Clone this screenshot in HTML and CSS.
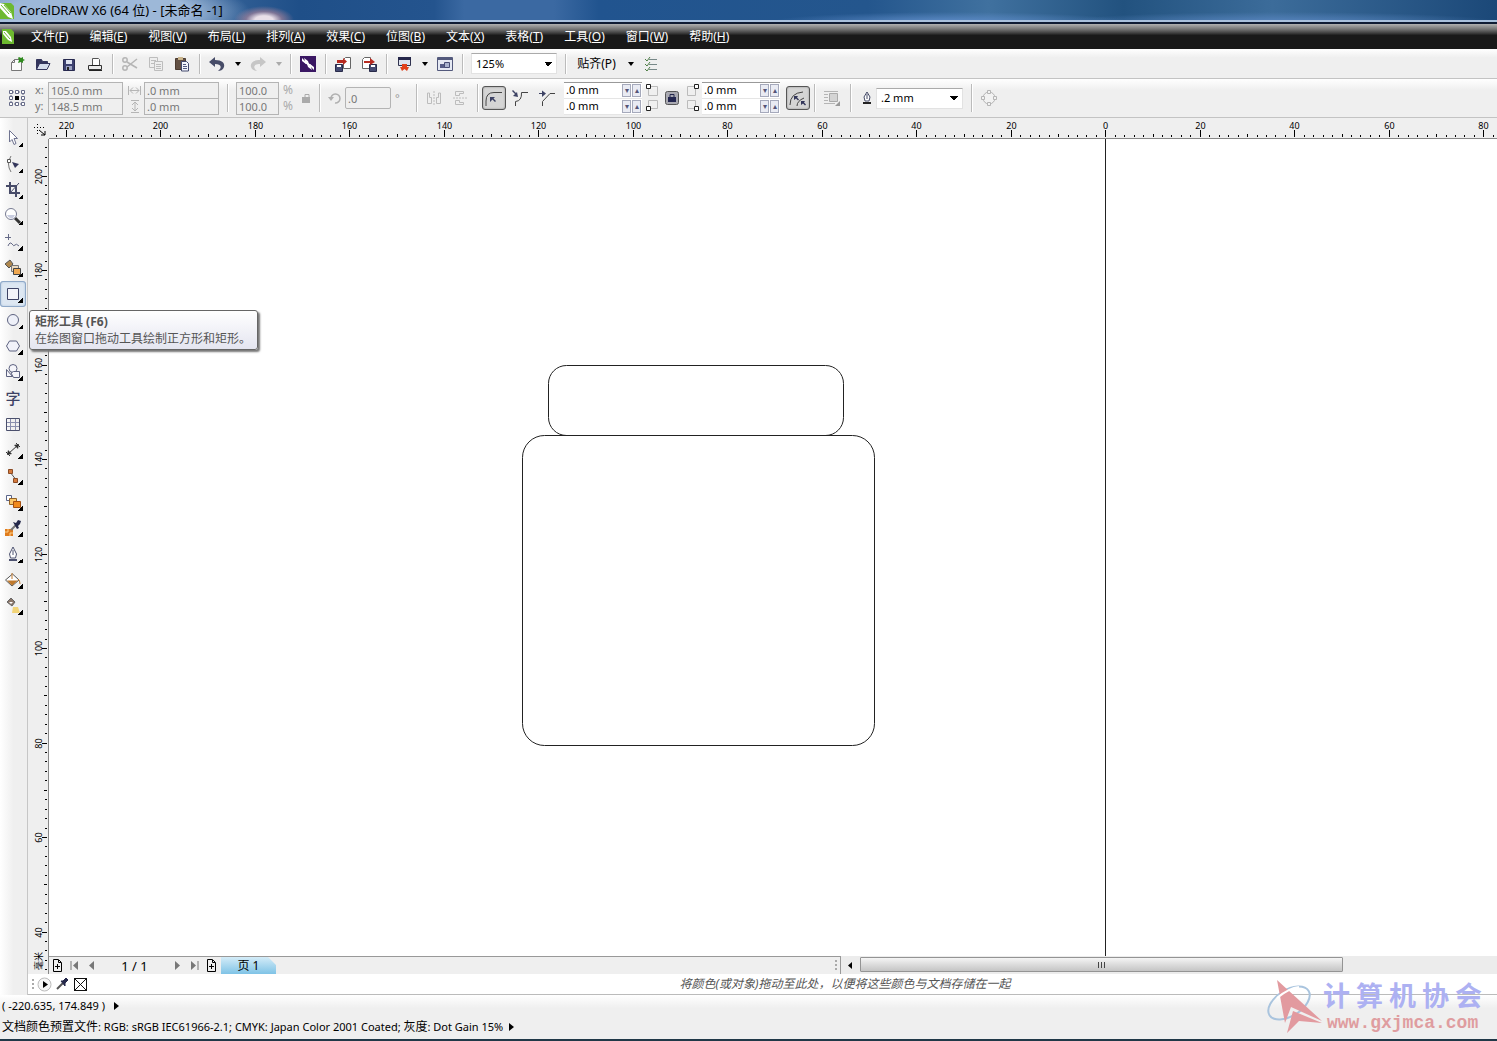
FILE: index.html
```html
<!DOCTYPE html>
<html lang="zh-CN">
<head>
<meta charset="utf-8">
<title>CorelDRAW X6 (64 位) - [未命名 -1]</title>
<link rel="stylesheet" href="styles.css">
</head>
<body>
<header class="titlebar">
  <svg class="app-logo" width="15" height="20" viewBox="0 0 15 20"><path d="M0 3H11L14 6V19H0Z" fill="#6db92f"/><path d="M0 3L4 4L11 12L13 19L8 17L0 8Z" fill="#fff"/><path d="M1 5L9 14M4 5L11 13" stroke="#6db92f"/></svg>
  <h1 class="title">CorelDRAW X6 (64 位) - [未命名 -1]</h1>
</header>

<nav class="menubar">
  <svg class="doc-logo" width="12" height="15" viewBox="0 0 12 15"><path d="M0 0H9L12 3V15H0Z" fill="#6db92f"/><path d="M1 2L4 2L9 8L10 13L6 11L1 5Z" fill="#fff"/><path d="M2 3L8 10" stroke="#6db92f"/></svg>
  <button class="menu">文件(<u>F</u>)</button>
  <button class="menu">编辑(<u>E</u>)</button>
  <button class="menu">视图(<u>V</u>)</button>
  <button class="menu">布局(<u>L</u>)</button>
  <button class="menu">排列(<u>A</u>)</button>
  <button class="menu">效果(<u>C</u>)</button>
  <button class="menu">位图(<u>B</u>)</button>
  <button class="menu">文本(<u>X</u>)</button>
  <button class="menu">表格(<u>T</u>)</button>
  <button class="menu">工具(<u>O</u>)</button>
  <button class="menu">窗口(<u>W</u>)</button>
  <button class="menu">帮助(<u>H</u>)</button>
</nav>

<div class="toolbar standard">
  <button class="tool" aria-label="新建"><svg width="16" height="16" viewBox="0 0 16 16"><path d="M2.500 14.500V6.500L5.500 3.500H12.500V14.500Z" fill="#fafafa" stroke="#777"/><path d="M5.500 3.500V6.500H2.500" fill="none" stroke="#777"/><path d="M10 1L12 2L14 1L14 3L16 4L14 5L14 7L12 6L9 7L10 4L9 2Z" fill="#2f8a1e"/></svg></button>
  <button class="tool" aria-label="打开"><svg width="16" height="16" viewBox="0 0 16 16"><path d="M1.500 13.500V3.500H6.500L7.500 5.500H12.500V7.500" fill="#33355c" stroke="#33355c"/><path d="M1.500 13.500L4.500 7.500H15L12 13.500Z" fill="#d5dcec" stroke="#33355c"/></svg></button>
  <button class="tool" aria-label="保存"><svg width="16" height="16" viewBox="0 0 16 16"><path d="M2.500 3.500H13.500V14.500H2.500Z" fill="#3d4170" stroke="#27294f"/><path d="M5 4H11V8H5Z" fill="#dfe3f0"/><path d="M5 10H11V14H5Z" fill="#9aa0c0"/><path d="M6 11H8V14H6Z" fill="#222"/></svg></button>
  <button class="tool" aria-label="打印"><svg width="16" height="16" viewBox="0 0 16 16"><path d="M5.500 9V2.500H11.500L12.500 3.500V9" fill="#fff" stroke="#555"/><path d="M1.500 9.500H14.500V13.500H1.500Z" fill="#ececec" stroke="#333"/><path d="M4 9.500H12M2 14.500H15" stroke="#222"/></svg></button>
  <i class="sep"></i>
  <button class="tool" aria-label="剪切"><svg width="18" height="16" viewBox="0 0 18 16" fill="none" stroke="#b5b5b5" stroke-width="1.500"><path d="M6 6L16 12M6 11L16 3"/><circle cx="4" cy="4" r="2.200"/><circle cx="4" cy="12" r="2.200"/></svg></button>
  <button class="tool" aria-label="复制"><svg width="16" height="16" viewBox="0 0 16 16" fill="#eee" stroke="#bdbdbd"><path d="M1.500 1.500H9.500V11.500H1.500ZM3 4.500H8M3 7.500H8"/><path d="M6.500 5.500H14.500V14.500H6.500ZM8 8.500H13M8 10.500H13M8 12.500H13"/></svg></button>
  <button class="tool" aria-label="粘贴"><svg width="16" height="16" viewBox="0 0 16 16"><path d="M1.500 2.500H11.500V13.500H1.500Z" fill="#625044" stroke="#4b3b31"/><path d="M4 1H9V4H4Z" fill="#c9b48c"/><path d="M7.500 5.500H12.500L14.500 7.500V15H7.500Z" fill="#f4f6fb" stroke="#454b6e"/><path d="M9 8.500H12M9 10.500H13M9 12.500H13" stroke="#555b80"/></svg></button>
  <i class="sep"></i>
  <button class="tool" aria-label="撤消"><svg width="18" height="16" viewBox="0 0 18 16"><path d="M1 6L7 1V4C14 4 17 7 16 11C15 14 12 15 10 15C14 12 14 8 7 8V11Z" fill="#474c68"/></svg></button>
  <button class="drop" aria-label="撤消列表"><i class="caret"></i></button>
  <button class="tool" aria-label="重做"><svg width="18" height="16" viewBox="0 0 18 16"><path d="M17 6L11 1V4C4 4 1 7 2 11C3 14 6 15 8 15C4 12 4 8 11 8V11Z" fill="#c6c6c6"/></svg></button>
  <button class="drop" aria-label="重做列表"><i class="caret pale"></i></button>
  <i class="sep"></i>
  <button class="tool" aria-label="搜索内容"><svg width="16" height="16" viewBox="0 0 16 16"><path d="M0 0H16V16H0Z" fill="#3a1763"/><path d="M2 2L5 5L4 2L8 5L9 8L6 8L2 5ZM14 14L11 11L12 14L8 11L7 8L10 8L14 11Z" fill="#fff"/><path d="M5 6L11 10" stroke="#fff" stroke-width="2"/></svg></button>
  <i class="sep"></i>
  <button class="tool" aria-label="导入"><svg width="18" height="16" viewBox="0 0 18 16"><path d="M9.500 12.500V3.500L11.500 1.500H16.500V12.500Z" fill="#fff" stroke="#666"/><path d="M1.500 8.500H8.500V15.500H1.500Z" fill="#444a72" stroke="#292b4a"/><path d="M3 9H7V11H3Z" fill="#fff"/><path d="M3 7V4H9V2L13 5.500L9 9V7Z" fill="#b72a20"/></svg></button>
  <button class="tool" aria-label="导出"><svg width="18" height="16" viewBox="0 0 18 16"><path d="M2.500 12.500V3.500L4.500 1.500H10.500V12.500Z" fill="#fff" stroke="#666"/><path d="M9.500 8.500H16.500V15.500H9.500Z" fill="#444a72" stroke="#292b4a"/><path d="M11 9H15V11H11Z" fill="#fff"/><path d="M4 5H10V2L15 6L10 9V7H4Z" fill="#b72a20"/></svg></button>
  <i class="sep"></i>
  <button class="tool" aria-label="应用程序启动器"><svg width="16" height="16" viewBox="0 0 16 16"><path d="M2.500 1.500H14.500V9.500H2.500Z" fill="#dde2ee" stroke="#30324f"/><path d="M2 1H15V4H2Z" fill="#25274a"/><path d="M6 8H11V11L13 11L11 15L8.500 13L6 15L4 11L6 11Z" fill="#e0401c"/></svg></button>
  <button class="drop" aria-label="应用程序列表"><i class="caret"></i></button>
  <button class="tool" aria-label="欢迎屏幕"><svg width="16" height="16" viewBox="0 0 16 16"><path d="M.5 1.500H15.500V14.500H.5Z" fill="#e5e9f3" stroke="#53597c"/><path d="M1 2H15V4H1Z" fill="#53597c"/><path d="M3 8H8V12H3Z" fill="#565d88"/><path d="M7.500 6.500H12.500V11.500H7.500Z" fill="#aab3cf" stroke="#464c75"/></svg></button>
  <i class="sep"></i>
  <select class="zoom-level" aria-label="缩放级别"><option>125%</option></select>
  <i class="sep"></i>
  <button class="snap">贴齐(P)</button>
  <button class="drop" aria-label="贴齐列表"><i class="caret"></i></button>
  <button class="tool" aria-label="选项"><svg width="14" height="16" viewBox="0 0 14 16" fill="none"><path d="M5 3.500H13M5 8.500H13M5 13.500H13" stroke="#788"/><path d="M1 3L3 5L6 1M1 8L3 10L6 6M1 13L3 15L6 11" stroke="#4e7f45"/></svg></button>
</div>

<div class="toolbar property">
  <svg class="origin" width="18" height="18" viewBox="0 0 18 18" fill="#fff" stroke="#666b88"><path d="M3 3H15V15H3Z" fill="none" stroke-dasharray="1 1"/><path d="M1.500 1.500h3v3h-3zM7.500 1.500h3v3h-3zM13.500 1.500h3v3h-3zM1.500 7.500h3v3h-3zM13.500 7.500h3v3h-3zM1.500 13.500h3v3h-3zM7.500 13.500h3v3h-3zM13.500 13.500h3v3h-3z"/><path d="M7 7H11V11H7Z" fill="#000" stroke="none"/></svg>
  <div class="pair-grid position">
    <label for="px">x:</label><input id="px" class="field" value="105.0 mm" disabled>
    <label for="py">y:</label><input id="py" class="field" value="148.5 mm" disabled>
  </div>
  <div class="pair-grid size">
    <label for="pw" aria-label="宽度"><svg width="13" height="11" viewBox="0 0 13 11" fill="none" stroke="#b5b5b5"><path d="M.5 1V10M12.500 1V10M2 5.500H11M5 2.500L2 5.500L5 8.500M8 2.500L11 5.500L8 8.500"/></svg></label><input id="pw" class="field" value=".0 mm" disabled>
    <label for="ph" aria-label="高度"><svg width="13" height="13" viewBox="0 0 13 13" fill="none" stroke="#b5b5b5"><path d="M3 .5H11M3 12.500H11M7 2V11M4 5L7 2L10 5M4 8L7 11L10 8"/></svg></label><input id="ph" class="field" value=".0 mm" disabled>
  </div>
  <i class="sep"></i>
  <div class="pair-grid scale">
    <input id="sx" class="field" value="100.0" disabled><label for="sx">%</label>
    <input id="sy" class="field" value="100.0" disabled><label for="sy">%</label>
  </div>
  <button class="tool ratio" aria-label="锁定比率"><svg width="12" height="12" viewBox="0 0 12 12"><path d="M2 5H10V11H2Z" fill="#aaa"/><path d="M5 5V2.500H9V5" fill="none" stroke="#aaa"/></svg></button>
  <i class="sep"></i>
  <label class="angle" for="rot" aria-label="旋转角度"><svg width="14" height="14" viewBox="0 0 14 14"><path d="M3 8A4.500 4.500 0 1 1 7 12" fill="none" stroke="#b0b0b0" stroke-width="1.500"/><path d="M0 6H6L3 10Z" fill="#b0b0b0"/></svg></label>
  <input id="rot" class="field rotation" value=".0" disabled>
  <span class="degree">°</span>
  <i class="sep"></i>
  <button class="tool" aria-label="水平镜像"><svg width="16" height="14" viewBox="0 0 16 14" fill="none" stroke="#bcbcbc"><path d="M1.500 2V12.500H5.500V6.500H3.500V2ZM14.500 2V12.500H10.500V6.500H12.500V2Z"/><path d="M8 0V14" stroke-dasharray="2 1"/></svg></button>
  <button class="tool" aria-label="垂直镜像"><svg width="16" height="16" viewBox="0 0 16 16" fill="none" stroke="#bcbcbc"><path d="M3.500 1.500H11.500V3.500H7.500V5.500H3.500ZM3.500 14.500H11.500V12.500H7.500V10.500H3.500Z"/><path d="M1 8H15" stroke-dasharray="2 1"/></svg></button>
  <i class="sep"></i>
  <button class="tool pressed" aria-label="圆角"><svg width="20" height="18" viewBox="0 0 20 18"><path d="M2 17V12Q2 3.500 10 3.500H18" fill="none" stroke="#444"/><path d="M6 8H11L9.500 9.500L12 12L11 13L8.500 10.500L6 13Z" fill="#3d4264"/></svg></button>
  <button class="tool corner" aria-label="扇形角"><svg width="18" height="18" viewBox="0 0 18 18"><path d="M4.500 17V12.500Q11 12 10.500 3.500H17" fill="none" stroke="#444"/><path d="M7 8L6 3L5 4L2 1L1 2L4 5L2 7Z" fill="#3d4264"/></svg></button>
  <button class="tool corner" aria-label="倒棱角"><svg width="18" height="18" viewBox="0 0 18 18"><path d="M4.500 17V12.500L12 4.500H17" fill="none" stroke="#444"/><path d="M1 4.500H5" stroke="#3d4264"/><path d="M4 1.500L8 4.500L4 8Z" fill="#3d4264"/></svg></button>
  <div class="radii">
    <div class="spin"><input aria-label="左上角" value=".0 mm"><button aria-label="减小">▾</button><button aria-label="增大">▴</button></div>
    <div class="spin"><input aria-label="左下角" value=".0 mm"><button aria-label="减小">▾</button><button aria-label="增大">▴</button></div>
  </div>
  <svg class="corners" width="14" height="28" viewBox="0 0 14 28" fill="none"><path d="M3.500 2.500H12.500V11.500H3.500ZM3.500 16.500H12.500V24.500H3.500Z" stroke="#bbb"/><path d="M1.500 .5H5.500V4.500H1.500ZM1.500 22.500H5.500V26.500H1.500Z" fill="#fff" stroke="#222"/></svg>
  <button class="tool link" aria-label="同时编辑所有角"><svg width="14" height="14" viewBox="0 0 14 14"><rect x=".5" y=".5" width="13" height="13" rx="2" fill="#a9a9b1" stroke="#555"/><path d="M3 6H11V11H3Z" fill="#23264f"/><path d="M5 6V3.500H9V6" fill="none" stroke="#23264f"/></svg></button>
  <svg class="corners" width="14" height="28" viewBox="0 0 14 28" fill="none"><path d="M1.500 2.500H9.500V11.500H1.500ZM1.500 16.500H9.500V24.500H1.500Z" stroke="#bbb"/><path d="M8.500 .5H12.500V4.500H8.500ZM8.500 22.500H12.500V26.500H8.500Z" fill="#fff" stroke="#222"/></svg>
  <div class="radii">
    <div class="spin"><input aria-label="右上角" value=".0 mm"><button aria-label="减小">▾</button><button aria-label="增大">▴</button></div>
    <div class="spin"><input aria-label="右下角" value=".0 mm"><button aria-label="减小">▾</button><button aria-label="增大">▴</button></div>
  </div>
  <button class="tool pressed relative" aria-label="相对角缩放"><svg width="20" height="18" viewBox="0 0 20 18"><path d="M2 16Q2 4 15 3M9 17Q9 12 16 9" fill="none" stroke="#444"/><path d="M6 7H10L9 8.500L11 10.500L10 11.500L8 9.500L6 11ZM13 12H17L16 13.500L18 15.500L17 16.500L15 14.500L13 16Z" fill="#33365a"/></svg></button>
  <i class="sep"></i>
  <button class="tool wrap" aria-label="文本换行"><svg width="18" height="18" viewBox="0 0 18 18"><path d="M1 2.500H15M1 5.500H5M1 8.500H5M1 11.500H5M1 14.500H12" stroke="#b5b5b5"/><path d="M6.500 4.500H14.500V12.500H6.500Z" fill="#d4d4d4" stroke="#aaa"/><path d="M17 12V17H12Z" fill="#999"/></svg></button>
  <i class="sep"></i>
  <label class="pen" for="outline" aria-label="轮廓宽度"><svg width="10" height="14" viewBox="0 0 10 14"><path d="M5 1L8 6L7 10H3L2 6ZM5 3V8" fill="#fff" stroke="#444a66"/><path d="M1 11H9V13H1Z" fill="#222"/></svg></label>
  <select id="outline" class="outline"><option>.2 mm</option></select>
  <i class="sep"></i>
  <button class="tool" aria-label="转换为曲线"><svg width="18" height="18" viewBox="0 0 18 18" fill="#f2f2f2" stroke="#b5b5b5"><circle cx="9" cy="9" r="6"/><path d="M7.500 1.500h3v3h-3zM7.500 13.500h3v3h-3zM1.500 7.500h3v3h-3zM13.500 7.500h3v3h-3z"/></svg></button>
</div>

<main class="workspace">
  <aside class="toolbox">
    <button class="fly" aria-label="选择工具"><svg width="18" height="18" viewBox="0 0 18 18"><path d="M5.500 1.500V13L8 10.500L10 15.500L12 14.500L10 9.500H13.500Z" fill="#fff" stroke="#6f7390"/></svg></button>
    <button class="fly" aria-label="形状工具"><svg width="18" height="18" viewBox="0 0 18 18"><path d="M7 1Q2 9 7 17" fill="none" stroke="#777"/><path d="M3.500 4.500h3v3h-3z" fill="#fff" stroke="#555"/><path d="M8 7L15 9L11 13Z" fill="#33365a"/></svg></button>
    <button class="fly" aria-label="裁剪工具"><svg width="18" height="18" viewBox="0 0 18 18"><path d="M2 5H12V16M6 1V12H16" fill="none" stroke="#474b68" stroke-width="2"/><path d="M6 12L15 2" stroke="#474b68"/></svg></button>
    <button class="fly" aria-label="缩放工具"><svg width="18" height="18" viewBox="0 0 18 18"><path d="M11 11L16 16" stroke="#333" stroke-width="3"/><circle cx="7" cy="7" r="5.500" fill="#fff" stroke="#777b92"/><path d="M3 8H11Q9 12 7 11.500Q4 11 3 8" fill="#c9cde0"/></svg></button>
    <button class="fly" aria-label="手绘工具"><svg width="18" height="18" viewBox="0 0 18 18" fill="none" stroke="#666b88"><path d="M1 4.500H7M4.500 1V7M4 13Q6 8 8 11T11 12T15 13"/></svg></button>
    <button class="fly" aria-label="智能填充工具"><svg width="18" height="18" viewBox="0 0 18 18"><path d="M1 5L6 1L9 5L5 9Z" fill="#b0884e" stroke="#555"/><path d="M7.500 6.500H14.500V12.500H7.500Z" fill="#ecd9bd" stroke="#777"/><path d="M9.500 9.500H16.500V15.500H9.500Z" fill="#f0a850" stroke="#444"/></svg></button>
    <button class="fly active" aria-label="矩形工具"><svg width="18" height="18" viewBox="0 0 18 18"><path d="M3.500 3.500H14.500V14.500H3.500Z" fill="#f3f4fa" stroke="#3d4264"/></svg></button>
    <button class="fly" aria-label="椭圆形工具"><svg width="18" height="18" viewBox="0 0 18 18"><circle cx="9" cy="9" r="5.500" fill="#eef0f8" stroke="#5d6280"/></svg></button>
    <button class="fly" aria-label="多边形工具"><svg width="18" height="18" viewBox="0 0 18 18"><path d="M2.500 9L5.500 4H12.500L15.500 9L12.500 14H5.500Z" fill="#f1f2fa" stroke="#5d6280"/></svg></button>
    <button class="fly" aria-label="基本形状"><svg width="18" height="18" viewBox="0 0 18 18" fill="#f5f5fa" stroke="#5d6280"><circle cx="9" cy="5.500" r="4"/><path d="M2.500 6.500L8.500 13.500H2.500ZM9.500 8.500H15.500V14.500H9.500L7 10Z"/></svg></button>
    <button class="glyph" aria-label="文本工具">字</button>
    <button aria-label="表格工具"><svg width="18" height="18" viewBox="0 0 18 18" fill="#fff" stroke="#8a8fae"><path d="M3 7.500H15M3 11.500H15M6.500 4V15M11.500 4V15"/><path d="M2.500 3.500H15.500V15.500H2.500Z" fill="none" stroke="#4a4f6c"/></svg></button>
    <button class="fly" aria-label="平行度量工具"><svg width="18" height="18" viewBox="0 0 18 18"><path d="M4 13L14 4M2 11L6 15M12 2L16 6" stroke="#333"/><path d="M3 14L4 9L8 13ZM15 3L14 8L10 4Z" fill="#333"/></svg></button>
    <button class="fly" aria-label="直线连接器"><svg width="18" height="18" viewBox="0 0 18 18"><path d="M6 5L13 14" stroke="#555"/><path d="M4.500 2.500h4v4h-4zM9.500 11.500h4v4h-4z" fill="#d67a3c" stroke="#8b4b24"/></svg></button>
    <button class="fly" aria-label="调和工具"><svg width="18" height="18" viewBox="0 0 18 18"><path d="M2.500 2.500h5v5h-5z" fill="#fff" stroke="#5a658a"/><path d="M5.500 5.500h7v6h-7z" fill="#fbc86b" stroke="#936226"/><path d="M9.500 8.500h7v6h-7z" fill="#f08a1d" stroke="#a34f10"/></svg></button>
    <button class="fly" aria-label="颜色滴管工具"><svg width="18" height="18" viewBox="0 0 18 18"><path d="M1 10H9V17H1Z" fill="#e07c1d"/><path d="M4 10V13H1M6 17V14H9" stroke="#fbd08d" fill="none"/><path d="M7 11L12 6" stroke="#777" stroke-width="2"/><path d="M9 3L12 4L14 1L17 2L16 5L14 7L15 9L13 10Z" fill="#25294b"/></svg></button>
    <button class="fly" aria-label="轮廓笔"><svg width="18" height="18" viewBox="0 0 18 18"><path d="M9 2L12.500 9L11.500 13H6.500L5.500 9ZM9 5V10" fill="#fff" stroke="#4d5270"/><path d="M5 14H13V16H5Z" fill="#4d5270"/></svg></button>
    <button class="fly" aria-label="填充工具"><svg width="18" height="18" viewBox="0 0 18 18"><path d="M1.500 9L8.500 3L15 9L8 15Z" fill="#fff" stroke="#555"/><path d="M3 9.500H14L8 14.500Z" fill="#c0792c"/><path d="M8 8V2M14 8Q16 9 16 13" stroke="#c0792c" fill="none"/></svg></button>
    <button class="fly" aria-label="交互式填充工具"><svg width="18" height="18" viewBox="0 0 18 18"><path d="M3 5L7 1L11 5L8 9Z" fill="#8a7568" stroke="#666"/><path d="M5 5H9L7 7Z" fill="#fff"/><path d="M9 10H14L16 16H8Z" fill="#f2d477"/></svg></button>
  </aside>

  <div class="tooltip" role="tooltip"><strong>矩形工具 (F6)</strong><span>在绘图窗口拖动工具绘制正方形和矩形。</span></div>

  <section class="document">
    <div class="ruler-row">
      <svg class="ruler-origin" width="20" height="20" viewBox="0 0 20 20"><path d="M9.500 6V16M6 9.500H16" stroke="#000" stroke-dasharray="1 2"/><path d="M11 12L17 17M17 13V17H13" fill="none" stroke="#000"/></svg>
      <svg class="ruler-x" id="ruler-x"></svg>
    </div>
    <div class="canvas-row">
      <svg class="ruler-y" id="ruler-y"></svg>
      <div class="view">
        <svg class="drawing">
          <line x1="1056.500" y1="0" x2="1056.500" y2="100%"/>
          <rect x="499.500" y="226.500" width="295" height="70" rx="18"/>
          <rect x="473.500" y="296.500" width="352" height="310" rx="22"/>
        </svg>
        <div class="pager-row">
          <div class="pager">
            <button aria-label="添加页"><svg width="11" height="13" viewBox="0 0 11 13" fill="none" stroke="#000"><path d="M1.500 .5H6.500L9.500 3.500V12.500H1.500ZM6.500 1V3.500H9M3 7.500H8M5.500 5V10"/></svg></button>
            <button aria-label="首页"><svg width="9" height="9" viewBox="0 0 9 9"><path d="M1 0V9" stroke="#777"/><path d="M8 0V9L3 4.500Z" fill="#777"/></svg></button>
            <button aria-label="上一页"><svg width="9" height="9" viewBox="0 0 9 9"><path d="M7 0V9L2 4.500Z" fill="#777"/></svg></button>
            <output class="count">1 / 1</output>
            <button aria-label="下一页"><svg width="9" height="9" viewBox="0 0 9 9"><path d="M2 0V9L7 4.500Z" fill="#777"/></svg></button>
            <button aria-label="末页"><svg width="9" height="9" viewBox="0 0 9 9"><path d="M8 0V9" stroke="#777"/><path d="M1 0V9L6 4.500Z" fill="#777"/></svg></button>
            <button aria-label="在后面添加页"><svg width="11" height="13" viewBox="0 0 11 13" fill="none" stroke="#000"><path d="M1.500 .5H6.500L9.500 3.500V12.500H1.500ZM6.500 1V3.500H9M3 7.500H8M5.500 5V10"/></svg></button>
            <button class="page-tab">页 1</button>
            <i class="grip"></i>
          </div>
          <div class="scroll">
            <button aria-label="向左滚动"><svg width="5" height="7" viewBox="0 0 5 7"><path d="M4 0V7L0 3.500Z"/></svg></button>
            <div class="thumb"><i></i><i></i><i></i></div>
            <div class="track"></div>
          </div>
        </div>
      </div>
    </div>
    <div class="palette">
      <i class="grip"></i>
      <button aria-label="调色板菜单"><svg width="15" height="15" viewBox="0 0 15 15"><circle cx="7.500" cy="7.500" r="6.500" fill="#f6f6f6" stroke="#bbb"/><path d="M6 4V11L11 7.500Z"/></svg></button>
      <button aria-label="滴管"><svg width="14" height="14" viewBox="0 0 14 14"><path d="M2 12L8 6" stroke="#555" stroke-width="2"/><path d="M6 4L8 4L11 1L13 3L10 6L10 9Z" fill="#25294b" stroke="#25294b"/></svg></button>
      <button aria-label="无填充"><svg width="15" height="15" viewBox="0 0 15 15"><path d="M1.500 1.500H13.500V13.500H1.500ZM1 1L14 14M14 1L1 14" fill="#fff" stroke="#111"/></svg></button>
      <em class="hint">将颜色(或对象)拖动至此处，以便将这些颜色与文档存储在一起</em>
    </div>
  </section>
</main>

<footer class="status">
  <p>( -220.635, 174.849 ) <i class="more"></i></p>
  <p><b>文档颜色预置文件</b>: RGB: sRGB IEC61966-2.1; CMYK: Japan Color 2001 Coated; <b>灰度</b>: Dot Gain 15% <i class="more"></i></p>
  <div class="watermark">
    <svg width="56" height="56" viewBox="0 0 56 56"><ellipse cx="22" cy="24" rx="23" ry="13" transform="rotate(-32 22 24)" fill="none" stroke="#a9c4de" stroke-width="2"/><path d="M10 1L55 42L24 28L18 44Z" fill="#e29a9f"/><path d="M26 32L55 44L32 42L20 54Z" fill="#e29a9f"/><path d="M10 19Q22 9 32 8" stroke="#fff" stroke-width="2" fill="none"/></svg>
    <div class="brand"><div class="brand-name"><span>计</span><span>算</span><span>机</span><span>协</span><span>会</span></div><div class="brand-url">www.gxjmca.com</div></div>
  </div>
</footer>
<script src="rulers.js"></script>
</body>
</html>
```
FILE: styles.css
```css
* { box-sizing: border-box; }
body {
  margin: 0;
  height: 100vh;
  display: flex;
  flex-direction: column;
  overflow: hidden;
  background: #efefef;
  color: #000;
  font: 11px/16px "Noto Sans", "Noto Sans CJK SC", sans-serif;
}
button, input, select { font: inherit; color: inherit; margin: 0; padding: 0; border: 0; background: none; border-radius: 0; }
button { display: flex; align-items: center; justify-content: center; flex: none; }
svg { display: block; flex: none; }
label { display: flex; align-items: center; }

.titlebar {
  display: flex;
  flex: none;
  height: 24px;
  gap: 4px;
  border-bottom: 2px solid #0f1b33;
  box-shadow: inset 0 -2px #a9c0dc;
  background:
    radial-gradient(ellipse 30px 14px at 264px 20px, #e9dfe8 30%, #c98f9d88 60%, transparent),
    radial-gradient(ellipse 150px 36px at 100px 12px, #9db8d8 60%, transparent),
    radial-gradient(ellipse 180px 10px at 950px 22px, #5e8cc8, transparent),
    radial-gradient(ellipse 220px 10px at 1280px 22px, #5784bd, transparent),
    linear-gradient(90deg, #6d93c0, #1f4f88 20%, #24548e 29%, #3b69a2 31%, #3b69a2 37%, #21548f 40%, #24568d 58%, #40719f 66%, #22527f 75%, #3c6c9a 85%, #1b4878);
}
.title { margin: 1px 0 0; font-size: 13px; line-height: 18px; font-weight: 400; }

.menubar {
  display: flex;
  align-items: center;
  flex: none;
  height: 25px;
  gap: 1px;
  padding: 0 2px;
  background: linear-gradient(#b0b0b0, #777 20%, #303030 40%, #191919 45%);
}
.doc-logo { margin-right: 6px; }
.menu { padding: 0 10px; color: #fff; font-size: 12px; line-height: 16px; }

.toolbar { display: flex; align-items: center; flex: none; background: linear-gradient(#fff, #efefef 30%); border-bottom: 1px solid #c3c3c3; }
.standard { height: 30px; padding-left: 4px; }
.tool { width: 26px; height: 26px; }
.drop { width: 15px; height: 26px; }
.caret { border: 3px solid transparent; border-top: 4px solid #000; border-bottom: 0; }
.pale { border-top-color: #aaa; }
.sep { flex: none; width: 1px; height: 20px; margin: 0 4px; background: #bbb; box-shadow: 1px 0 #fff; }
select {
  appearance: none;
  height: 21px;
  width: 86px;
  padding: 0 4px;
  border: 1px solid #e2e2e2;
  border-top-color: #aaa;
  background:
    linear-gradient(45deg, transparent 50%, #000 50%) right 8px center / 4px 4px no-repeat,
    linear-gradient(-45deg, transparent 50%, #000 50%) right 4px center / 4px 4px no-repeat,
    #fff;
}
.zoom-level { margin: 0 4px; }
.snap { width: 53px; font-size: 12px; }

.property { height: 39px; padding-left: 8px; color: #777; }
.property .sep { height: 28px; }
.pair-grid { display: grid; flex: none; grid-auto-rows: 16px; align-items: stretch; }
.origin { margin-right: 9px; }
.position { grid-template-columns: 13px 75px; }
.size { grid-template-columns: 21px 75px; margin-right: 4px; }
.size label { padding-left: 5px; }
.scale { grid-template-columns: 43px 18px; margin-left: 4px; }
.scale label { padding-left: 4px; color: #aaa; font-size: 12px; }
.field { min-width: 0; height: 17px; padding: 0 2px; border: 1px solid #b4b4b4; background: #efefef; color: #777; }
.rotation { width: 46px; height: 22px; border-radius: 2px; }
.angle { width: 21px; padding-left: 4px; }
.ratio { width: 18px; }
.degree { width: 21px; padding-left: 4px; color: #999; }
.property .pressed { width: 24px; height: 24px; border: 1px solid #555; border-radius: 3px; background: #d5d5d5; box-shadow: inset 0 0 2px #888; }
.corner { margin-left: 1px; }
.radii { width: 78px; margin-left: 4px; border-top: 1px solid #999; background: #fff; color: #000; }
.spin { display: flex; align-items: center; height: 16px; border-bottom: 1px solid #e5e5e5; }
.spin input { flex: 1; min-width: 0; padding-left: 2px; }
.spin button { width: 9px; height: 13px; margin-right: 1px; border: 1px solid #a5a9bb; background: #e9ebf3; color: #557; font-size: 8px; line-height: 8px; }
.corners { margin: 0 2px 0 3px; }
.corners + .radii { margin-left: 0; }
.link { width: 22px; }
.relative { margin-left: 6px; }
.wrap { margin-right: 1px; }
.pen { width: 21px; padding-left: 7px; }
.property .outline { color: #000; width: 87px; margin-right: 4px; }

.workspace { display: flex; flex: 1; min-height: 0; position: relative; }
.toolbox { flex: none; width: 28px; padding-top: 7px; border-right: 1px solid #c6c6c6; background: linear-gradient(90deg, #fff, #efefef 50%); }
.toolbox button { width: 26px; height: 26px; }
.fly { background: linear-gradient(135deg, transparent 50%, #000 50%) 18px 17px / 5px 5px no-repeat; }
.toolbox .active { outline: 1px solid #8fa9c8; outline-offset: -1px; border-radius: 3px; background-color: #dde7f2; box-shadow: inset 0 0 3px #7f9fc8; }
.glyph { color: #3d4264; font-size: 15px; font-weight: 500; }
.tooltip {
  position: absolute;
  z-index: 2;
  left: 29px;
  top: 192px;
  display: flex;
  flex-direction: column;
  padding: 2px 6px 2px 5px;
  border: 1px solid #666;
  border-radius: 3px;
  background: linear-gradient(#fff, #e4e5f0);
  box-shadow: 2px 2px 2px #777;
  color: #555;
  font-size: 12px;
  line-height: 17px;
  white-space: nowrap;
}
.document { display: flex; flex: 1; min-width: 0; flex-direction: column; }
.ruler-row { display: flex; flex: none; height: 21px; }
.ruler-origin { margin-right: 1px; }
.ruler-x { flex: 1; min-width: 0; height: 21px; border-bottom: 1px solid #888; }
.ruler-y { width: 21px; height: 100%; border-right: 1px solid #888; }
.ruler-x, .ruler-y { font-size: 9px; text-anchor: middle; overflow: hidden; }
.canvas-row { display: flex; flex: 1; min-height: 0; }
.view { display: flex; flex: 1; min-width: 0; flex-direction: column; background: #fff; }
.drawing { flex: 1; width: 100%; min-height: 0; fill: none; stroke: #222; }
.pager-row { display: flex; flex: none; height: 18px; background: #efefef; }
.pager { display: flex; align-items: center; flex: 792; border-top: 1px solid #999; border-right: 1px solid #999; }
.pager button { width: 17px; height: 17px; }
.count { width: 69px; text-align: center; font-size: 13px; }
.pager .page-tab { width: 55px; margin-left: 1px; background: linear-gradient(#d4ecf8, #7fc3e6); clip-path: polygon(0 0, 47px 0, 100% 8px, 100% 100%, 0 100%); font-size: 12px; }
.grip { flex: none; width: 2px; height: 11px; background: repeating-linear-gradient(#aaa 0 2px, transparent 2px 4px); }
.pager .grip { margin-left: auto; margin-right: 3px; }
.scroll { display: flex; flex: 656; background: #ececec; }
.scroll button { width: 19px; }
.thumb { display: flex; flex: 482; align-items: center; justify-content: center; gap: 2px; height: 15px; margin-top: 1px; border: 1px solid #949494; border-radius: 1px; background: linear-gradient(#f5f5f5, #dcdcdc 50%, #c5c5c5); }
.thumb i { width: 1px; height: 6px; background: #444; }
.track { flex: 155; }
.palette { display: flex; align-items: center; flex: none; height: 21px; padding-left: 4px; border-bottom: 1px solid #bbb; background: #fff; }
.palette button { width: 18px; }
.palette .grip { margin-right: 1px; }
.hint { flex: 1; padding-left: 104px; text-align: center; color: #555; font-size: 12px; }

.status { position: relative; flex: none; height: 46px; padding: 3px 2px 0; border-bottom: 2px solid #203848; background: linear-gradient(#fff, #efefef 30%); }
.status p { margin: 0 0 5px; }
.status b { font-weight: 400; font-size: 12px; }
.more { display: inline-block; margin-left: 6px; border: 4px solid transparent; border-left: 5px solid #000; border-right: 0; }
.status p + p .more { margin-left: 3px; }
.watermark { position: absolute; right: 15px; bottom: 4px; display: flex; }
.brand { display: flex; flex-direction: column; width: 159px; }
.brand-name { display: flex; justify-content: space-between; color: #adb1f2; font-size: 27px; line-height: 34px; font-weight: 700; }
.brand-url { margin-left: 4px; color: #df9da0; font: bold 18px/20px "Liberation Mono", monospace; }
```
FILE: rulers.js
```
const STEP = 9.45;
const HALF_OFFSET = 0.5;

function draw(svg, length, origin, vertical) {
  let out = "";
  const first = Math.ceil(-origin / STEP);
  const last = Math.floor((length - origin) / STEP);
  for (let i = first; i <= last; i++) {
    const p = Math.floor(origin + i * STEP) + HALF_OFFSET;
    const size = i % 10 === 0 ? (vertical ? 5 : 7) : i % 5 === 0 ? 3 : 2;
    out += vertical
      ? `<path d="M${19 - size} ${p}H19" stroke="#000"/>`
      : `<path d="M${p} ${19 - size}V19" stroke="#000"/>`;
    if (i % 10 === 0) {
      const label = Math.abs(i * 2);
      out += vertical
        ? `<text transform="translate(14 ${p}) rotate(-90)">${label}</text>`
        : `<text x="${p}" y="11">${label}</text>`;
    }
  }
  if (vertical) {
    out += `<text transform="translate(14 ${length - 13}) rotate(-90)">毫米</text>`;
  }
  svg.innerHTML = out;
}

function drawRulers() {
  const x = document.getElementById("ruler-x");
  const y = document.getElementById("ruler-y");
  draw(x, x.getBoundingClientRect().width, 1056.8, false);
  draw(y, y.getBoundingClientRect().height, 982, true);
}

drawRulers();
window.addEventListener("resize", drawRulers);
```
